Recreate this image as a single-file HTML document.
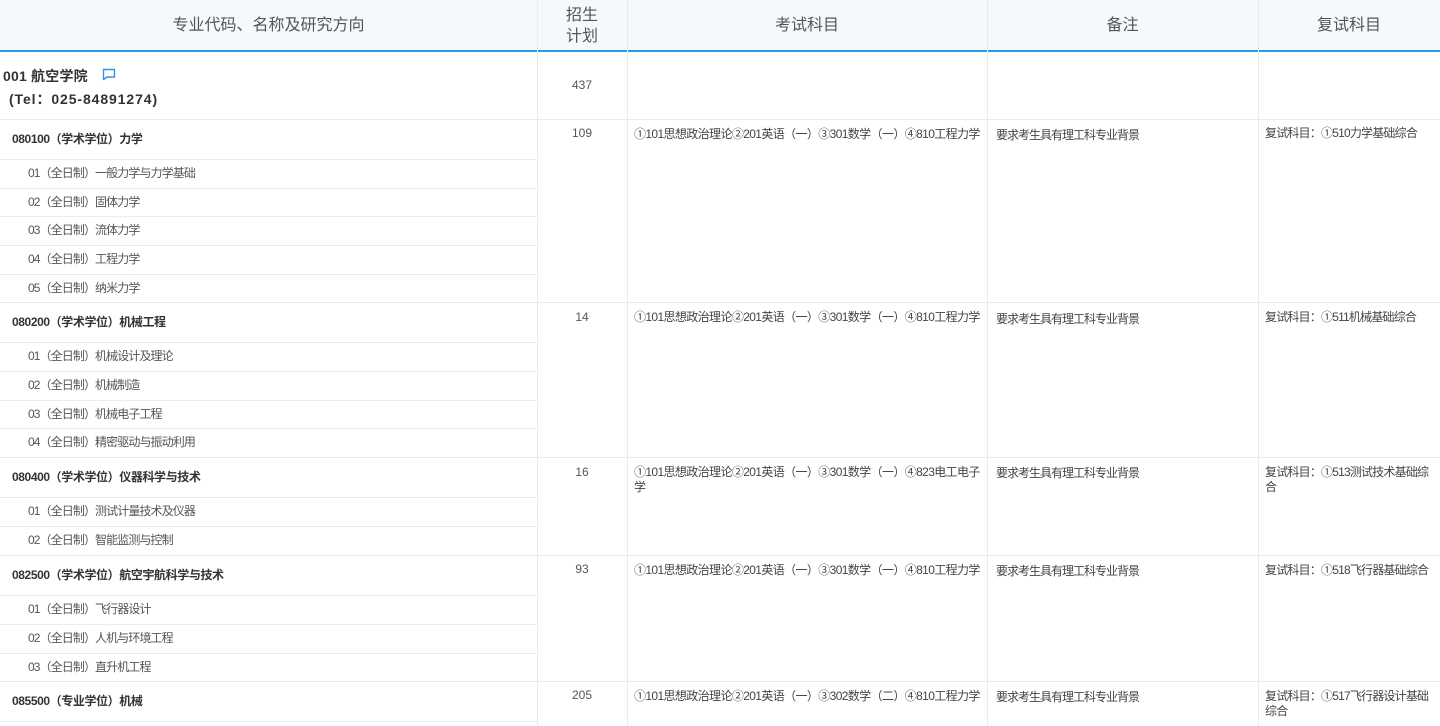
<!DOCTYPE html>
<html><head><meta charset="utf-8"><style>
*{margin:0;padding:0;box-sizing:border-box}
body{width:1440px;height:726px;overflow:hidden;background:#fff;position:relative;font-family:"Liberation Sans","Noto Sans CJK SC",sans-serif;color:#333}
.a{position:absolute}
.v{position:absolute;top:0;width:1px;height:726px;background:#e6ecf0}
.h{position:absolute;height:1px;background:#e6ecf0}
.hd{position:absolute;top:0;left:0;width:1440px;height:51px;background:#f5f8fc}
.ht{position:absolute;top:0;height:51px;display:flex;align-items:center;justify-content:center;font-size:16px;color:#555;text-align:center;line-height:21px}
.mj{position:absolute;left:12px;font-size:12px;font-weight:bold;color:#333;line-height:40px;height:40px;letter-spacing:-0.4px}
.sb{position:absolute;left:28px;font-size:12px;color:#555;line-height:28px;letter-spacing:-0.9px}
.n{position:absolute;left:537px;width:90px;text-align:center;font-size:12px;color:#555}
.c{position:absolute;font-size:12px;color:#444;line-height:15px;white-space:nowrap}
.e{letter-spacing:-0.62px}
.r{letter-spacing:-1px}
.f{letter-spacing:-0.8px}
</style></head><body>
<div class="hd"></div>
<div class="a" style="top:50px;left:0;width:1440px;height:2px;background:#2a9be8"></div>
<div class="ht" style="left:0;width:537px">专业代码、名称及研究方向</div>
<div class="ht" style="left:537px;width:90px">招生<br>计划</div>
<div class="ht" style="left:627px;width:360px">考试科目</div>
<div class="ht" style="left:987px;width:271px">备注</div>
<div class="ht" style="left:1258px;width:182px">复试科目</div>
<div class="v" style="left:537px"></div>
<div class="v" style="left:627px"></div>
<div class="v" style="left:987px"></div>
<div class="v" style="left:1258px"></div>

<div class="h" style="top:119px;left:0;width:1440px"></div>
<div class="h" style="top:302px;left:0;width:1440px"></div>
<div class="h" style="top:457px;left:0;width:1440px"></div>
<div class="h" style="top:555px;left:0;width:1440px"></div>
<div class="h" style="top:681px;left:0;width:1440px"></div>
<div class="h" style="top:159px;left:0;width:537px"></div>
<div class="h" style="top:188px;left:0;width:537px"></div>
<div class="h" style="top:216px;left:0;width:537px"></div>
<div class="h" style="top:245px;left:0;width:537px"></div>
<div class="h" style="top:274px;left:0;width:537px"></div>
<div class="h" style="top:342px;left:0;width:537px"></div>
<div class="h" style="top:371px;left:0;width:537px"></div>
<div class="h" style="top:400px;left:0;width:537px"></div>
<div class="h" style="top:428px;left:0;width:537px"></div>
<div class="h" style="top:497px;left:0;width:537px"></div>
<div class="h" style="top:526px;left:0;width:537px"></div>
<div class="h" style="top:595px;left:0;width:537px"></div>
<div class="h" style="top:624px;left:0;width:537px"></div>
<div class="h" style="top:653px;left:0;width:537px"></div>
<div class="h" style="top:721px;left:0;width:537px"></div>

<div class="a" style="left:3px;top:66px;font-size:14px;font-weight:bold;color:#333;letter-spacing:0.2px">001 航空学院</div>
<svg class="a" style="left:102px;top:68px" width="14" height="13" viewBox="0 0 14 13"><path d="M1.5 1.5h11v7.5H5l-3.5 2.5z" fill="none" stroke="#3a8ee6" stroke-width="1.4" stroke-linejoin="round"/></svg>
<div class="a" style="left:9px;top:89px;font-size:14px;font-weight:bold;color:#333;letter-spacing:0.9px">(Tel：025-84891274)</div>
<div class="n" style="top:78px">437</div>

<div class="mj" style="top:119px">080100（学术学位）力学</div>
<div class="sb" style="top:159px">01（全日制）一般力学与力学基础</div>
<div class="sb" style="top:188px">02（全日制）固体力学</div>
<div class="sb" style="top:216px">03（全日制）流体力学</div>
<div class="sb" style="top:245px">04（全日制）工程力学</div>
<div class="sb" style="top:274px">05（全日制）纳米力学</div>
<div class="n" style="top:126px">109</div>
<div class="c e" style="left:634px;top:127px">①101思想政治理论②201英语（一）③301数学（一）④810工程力学</div>
<div class="c r" style="left:996px;top:128px">要求考生具有理工科专业背景</div>
<div class="c f" style="left:1265px;top:126px">复试科目：①510力学基础综合</div>

<div class="mj" style="top:302px">080200（学术学位）机械工程</div>
<div class="sb" style="top:342px">01（全日制）机械设计及理论</div>
<div class="sb" style="top:371px">02（全日制）机械制造</div>
<div class="sb" style="top:400px">03（全日制）机械电子工程</div>
<div class="sb" style="top:428px">04（全日制）精密驱动与振动利用</div>
<div class="n" style="top:310px">14</div>
<div class="c e" style="left:634px;top:310px">①101思想政治理论②201英语（一）③301数学（一）④810工程力学</div>
<div class="c r" style="left:996px;top:312px">要求考生具有理工科专业背景</div>
<div class="c f" style="left:1265px;top:310px">复试科目：①511机械基础综合</div>

<div class="mj" style="top:457px">080400（学术学位）仪器科学与技术</div>
<div class="sb" style="top:497px">01（全日制）测试计量技术及仪器</div>
<div class="sb" style="top:526px">02（全日制）智能监测与控制</div>
<div class="n" style="top:465px">16</div>
<div class="c e" style="left:634px;top:465px">①101思想政治理论②201英语（一）③301数学（一）④823电工电子<br>学</div>
<div class="c r" style="left:996px;top:466px">要求考生具有理工科专业背景</div>
<div class="c f" style="left:1265px;top:465px">复试科目：①513测试技术基础综<br>合</div>

<div class="mj" style="top:555px">082500（学术学位）航空宇航科学与技术</div>
<div class="sb" style="top:595px">01（全日制）飞行器设计</div>
<div class="sb" style="top:624px">02（全日制）人机与环境工程</div>
<div class="sb" style="top:653px">03（全日制）直升机工程</div>
<div class="n" style="top:562px">93</div>
<div class="c e" style="left:634px;top:563px">①101思想政治理论②201英语（一）③301数学（一）④810工程力学</div>
<div class="c r" style="left:996px;top:564px">要求考生具有理工科专业背景</div>
<div class="c f" style="left:1265px;top:563px">复试科目：①518飞行器基础综合</div>

<div class="mj" style="top:681px">085500（专业学位）机械</div>
<div class="n" style="top:688px">205</div>
<div class="c e" style="left:634px;top:689px">①101思想政治理论②201英语（一）③302数学（二）④810工程力学</div>
<div class="c r" style="left:996px;top:690px">要求考生具有理工科专业背景</div>
<div class="c f" style="left:1265px;top:689px">复试科目：①517飞行器设计基础<br>综合</div>
</body></html>
